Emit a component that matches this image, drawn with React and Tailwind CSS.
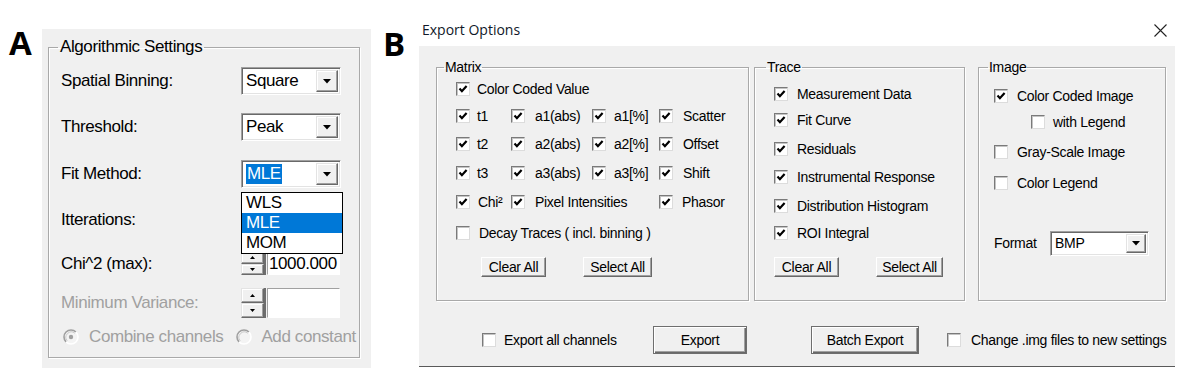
import React from "react";

function Check({ checked }) {
  return (
    <span className="flex h-[14px] w-[14px] shrink-0 items-center justify-center border border-t-[#7a7a7a] border-l-[#7a7a7a] border-r-[#dcdcdc] border-b-[#dcdcdc] bg-white shadow-[inset_1px_1px_0_#c4c4c4]">
      {checked && (
        <svg width="10" height="10" viewBox="0 0 10 10" className="block">
          <path d="M1.5 4.6 L3.9 7.2 L8.6 2" stroke="#000" strokeWidth="2.2" fill="none" />
        </svg>
      )}
    </span>
  );
}

function CI({ checked, label, gap = "gap-[9px]", cls = "" }) {
  return (
    <div className={`flex h-[20px] items-center whitespace-nowrap ${gap} ${cls}`}>
      <Check checked={checked} />
      <span>{label}</span>
    </div>
  );
}

function Btn({ children, w, cls = "" }) {
  return (
    <div
      className={`flex h-[20px] items-center justify-center whitespace-nowrap border border-t-white border-l-white border-r-[#696969] border-b-[#696969] bg-[#f0f0f0] shadow-[inset_-1px_-1px_0_#a0a0a0] ${w} ${cls}`}
    >
      {children}
    </div>
  );
}

function BigBtn({ children, w, cls = "" }) {
  return (
    <div className={`flex h-[28px] items-center justify-center whitespace-nowrap border border-[#6e6e6e] bg-[#f0f0f0] shadow-[inset_1px_1px_0_#fff,inset_-1px_-1px_0_#696969,inset_-2px_-2px_0_#a0a0a0] ${w} ${cls}`}>
      {children}
    </div>
  );
}

function DropBtn({ w = "w-[22px]" }) {
  return (
    <div className={`flex items-center justify-center border border-t-[#e3e3e3] border-l-[#e3e3e3] border-r-[#696969] border-b-[#696969] bg-[#f0f0f0] shadow-[inset_-1px_-1px_0_#a0a0a0,inset_1px_1px_0_#fff] ${w}`}>
      <svg width="8" height="5" viewBox="0 0 8 5" className="block">
        <path d="M0 0 H8 L4 4.5 Z" fill="#000" />
      </svg>
    </div>
  );
}

function Combo({ w, h, children, btnW }) {
  return (
    <div className={`flex items-stretch border border-t-[#a0a0a0] border-l-[#a0a0a0] border-r-white border-b-white bg-white p-[2px] shadow-[inset_1px_1px_0_#696969,inset_-1px_-1px_0_#e3e3e3] ${w} ${h}`}>
      <div className="flex flex-1 items-center pl-[2px]">{children}</div>
      <DropBtn w={btnW} />
    </div>
  );
}

function SpinHalf({ up }) {
  return (
    <div className="flex flex-1 items-center justify-center border border-t-[#e3e3e3] border-l-[#e3e3e3] border-r-[#696969] border-b-[#696969] bg-[#f0f0f0] shadow-[inset_-1px_-1px_0_#a0a0a0,inset_1px_1px_0_#fff]">
      <svg width="5" height="3" viewBox="0 0 5 3" className="block">
        {up ? <path d="M2.5 0 L5 3 H0 Z" fill="#000" /> : <path d="M0 0 H5 L2.5 3 Z" fill="#000" />}
      </svg>
    </div>
  );
}

function SpinEdit({ h, value }) {
  return (
    <div className={`flex items-stretch ${h}`}>
      <div className="flex w-[25px] flex-col border-r-2 border-r-[#6d6d6d]">
        <SpinHalf up />
        <SpinHalf />
      </div>
      <div className="ml-[1px] flex w-[73px] items-center border border-t-[#a0a0a0] border-l-[#a0a0a0] border-r-white border-b-white bg-white pl-[1px]">
        {value}
      </div>
    </div>
  );
}

function Radio({ checked }) {
  return (
    <svg width="16" height="16" viewBox="0 0 16 16" className="block shrink-0">
      <circle cx="8" cy="8" r="7" fill="#f4f4f4" />
      <path d="M3.05 12.95 A7 7 0 0 1 12.95 3.05" stroke="#a0a0a0" strokeWidth="1.6" fill="none" />
      <path d="M12.95 3.05 A7 7 0 0 1 3.05 12.95" stroke="#ffffff" strokeWidth="1.6" fill="none" />
      <path d="M4.2 11.8 A5.4 5.4 0 0 1 11.8 4.2" stroke="#c8c8c8" strokeWidth="1" fill="none" />
      {checked && <circle cx="8" cy="8" r="2.2" fill="#a0a0a0" />}
    </svg>
  );
}

function PanelA() {
  return (
    <div className="mt-[29px] flex h-[339px] w-[329px] flex-col bg-[#f0f0f0] pt-[9px] pl-[6px] pr-[11px] pb-[10px] text-[17px] tracking-[-0.4px] text-black">
      <fieldset className="relative flex-1 border border-[#a9a9a9] shadow-[inset_1px_1px_0_#fff,1px_1px_0_#fff]">
        <legend className="ml-[9px] px-[2px] leading-[18px]">Algorithmic Settings</legend>
        <div className="flex flex-col">
          <div className="mt-[11px] flex h-[28px] items-center">
            <div className="w-[192px] pl-[12px]">Spatial Binning:</div>
            <Combo w="w-[100px]" h="h-[28px]">Square</Combo>
          </div>
          <div className="mt-[18px] flex h-[28px] items-center">
            <div className="w-[192px] pl-[12px]">Threshold:</div>
            <Combo w="w-[100px]" h="h-[28px]">Peak</Combo>
          </div>
          <div className="relative mt-[19px] flex h-[28px] items-center">
            <div className="w-[192px] pl-[12px]">Fit Method:</div>
            <Combo w="w-[100px]" h="h-[28px]">
              <span className="bg-[#0078d7] px-[1px] leading-[20px] text-white">MLE</span>
            </Combo>
            <div className="absolute top-[32px] left-[192px] z-10 w-[102px] border border-black bg-white">
              <div className="h-[20px] pl-[4px] leading-[20px]">WLS</div>
              <div className="h-[20px] bg-[#0078d7] pl-[4px] leading-[20px] text-white">MLE</div>
              <div className="h-[20px] pl-[4px] leading-[20px]">MOM</div>
            </div>
          </div>
          <div className="mt-[22px] flex h-[20px] items-center">
            <div className="w-[192px] pl-[12px]">Itterations:</div>
          </div>
          <div className="mt-[22px] flex h-[23px] items-center">
            <div className="w-[192px] pl-[12px]">Chi^2 (max):</div>
            <SpinEdit h="h-[23px]" value="1000.000" />
          </div>
          <div className="mt-[13px] flex h-[30px] items-center text-[#a0a0a0]">
            <div className="w-[192px] pl-[12px]">Minimum Variance:</div>
            <SpinEdit h="h-[30px]" value="" />
          </div>
          <div className="mt-[9px] flex h-[20px] items-center pl-[14px] text-[#a0a0a0]">
            <Radio checked />
            <span className="ml-[10px]">Combine channels</span>
            <span className="ml-[13px]"><Radio /></span>
            <span className="ml-[9px]">Add constant</span>
          </div>
        </div>
      </fieldset>
    </div>
  );
}

function Group({ title, w, cls = "", legendCls, children }) {
  return (
    <fieldset className={`border border-[#a9a9a9] shadow-[inset_1px_1px_0_#fff,1px_1px_0_#fff] ${w} ${cls}`}>
      <legend className={`px-[1px] leading-[16px] ${legendCls}`}>{title}</legend>
      {children}
    </fieldset>
  );
}

function PanelB() {
  return (
    <div className="flex w-[756px] flex-col text-[14px] tracking-[-0.3px] text-black">
      <div className="flex h-[46px] items-start">
        <div className="mt-[20px] pl-[3px] font-['Open_Sans',sans-serif] text-[14px] leading-[20px] tracking-normal text-[#101828]">
          Export Options
        </div>
        <svg width="13" height="13" viewBox="0 0 13 13" className="mt-[24px] mr-[8px] ml-auto block">
          <path d="M0.5 0.5 L12.5 12.5 M12.5 0.5 L0.5 12.5" stroke="#222" strokeWidth="1.1" />
        </svg>
      </div>
      <div className="flex h-[321px] flex-col border-b border-[#5a5a5a] bg-[#f0f0f0] pt-[13px] pl-[17px]">
        <div className="flex h-[242px] items-stretch">
          <Group title="Matrix" w="w-[313px]" legendCls="ml-[7px]">
            <div className="flex flex-col pl-[19px]">
              <CI checked label="Color Coded Value" gap="gap-[7px]" cls="mt-[4px]" />
              {[
                ["t1", "a1(abs)", "a1[%]", "Scatter", "mt-[7px]"],
                ["t2", "a2(abs)", "a2[%]", "Offset", "mt-[8px]"],
                ["t3", "a3(abs)", "a3[%]", "Shift", "mt-[9px]"],
              ].map((r) => (
                <div key={r[0]} className={`grid grid-cols-[55px_81px_67px_auto] ${r[4]}`}>
                  <CI checked label={r[0]} gap="gap-[7px]" />
                  <CI checked label={r[1]} gap="gap-[10px]" />
                  <CI checked label={r[2]} gap="gap-[8px]" />
                  <CI checked label={r[3]} gap="gap-[10px]" />
                </div>
              ))}
              <div className="mt-[9px] grid grid-cols-[55px_81px_67px_auto]">
                <CI checked label="Chi²" gap="gap-[8px]" />
                <CI checked label="Pixel Intensities" gap="gap-[10px]" cls="col-span-2" />
                <CI checked label="Phasor" gap="gap-[9px]" />
              </div>
              <CI label="Decay Traces ( incl. binning )" gap="gap-[9px]" cls="mt-[11px]" />
              <div className="mt-[14px] ml-[25px] flex">
                <Btn w="w-[65px]">Clear All</Btn>
                <Btn w="w-[69px]" cls="ml-[37px]">Select All</Btn>
              </div>
            </div>
          </Group>
          <Group title="Trace" w="w-[211px]" cls="ml-[5px]" legendCls="ml-[11px]">
            <div className="flex flex-col pl-[19px]">
              <CI checked label="Measurement Data" cls="mt-[9px]" />
              <CI checked label="Fit Curve" cls="mt-[6px]" />
              <CI checked label="Residuals" cls="mt-[9px]" />
              <CI checked label="Instrumental Response" cls="mt-[8px]" />
              <CI checked label="Distribution Histogram" cls="mt-[9px]" />
              <CI checked label="ROI Integral" cls="mt-[7px]" />
              <div className="mt-[14px] flex">
                <Btn w="w-[65px]">Clear All</Btn>
                <Btn w="w-[67px]" cls="ml-[37px]">Select All</Btn>
              </div>
            </div>
          </Group>
          <Group title="Image" w="w-[188px]" cls="ml-[13px]" legendCls="ml-[9px]">
            <div className="flex flex-col pl-[15px]">
              <CI checked label="Color Coded Image" cls="mt-[11px]" />
              <CI label="with Legend" cls="mt-[6px] pl-[37px]" gap="gap-[8px]" />
              <CI label="Gray-Scale Image" cls="mt-[10px]" />
              <CI label="Color Legend" cls="mt-[11px]" />
              <div className="mt-[38px] flex h-[25px] items-center">
                <div className="w-[56px]">Format</div>
                <Combo w="w-[99px]" h="h-[25px]" btnW="w-[20px]">BMP</Combo>
              </div>
            </div>
          </Group>
        </div>
        <div className="mt-[25px] flex h-[28px] items-center">
          <div className="flex w-[217px] items-center pl-[46px]">
            <Check />
            <span className="ml-[8px]">Export all channels</span>
          </div>
          <BigBtn w="w-[94px]">Export</BigBtn>
          <BigBtn w="w-[108px]" cls="ml-[64px]">Batch Export</BigBtn>
          <div className="ml-[28px] flex items-center">
            <Check />
            <span className="ml-[10px] whitespace-nowrap">Change .img files to new settings</span>
          </div>
        </div>
      </div>
    </div>
  );
}

export default function App() {
  return (
    <div className="flex h-[382px] w-[1200px] items-start overflow-hidden bg-white font-['Liberation_Sans',Arial,sans-serif]">
      <div className="w-[42px] pt-[26px] pl-[9px] font-['Open_Sans',sans-serif] text-[33px] leading-none font-bold text-black">
        A
      </div>
      <PanelA />
      <div className="w-[48px] pt-[27px] pl-[12px] font-['Open_Sans',sans-serif] text-[33px] leading-none font-bold text-black">
        B
      </div>
      <PanelB />
    </div>
  );
}
